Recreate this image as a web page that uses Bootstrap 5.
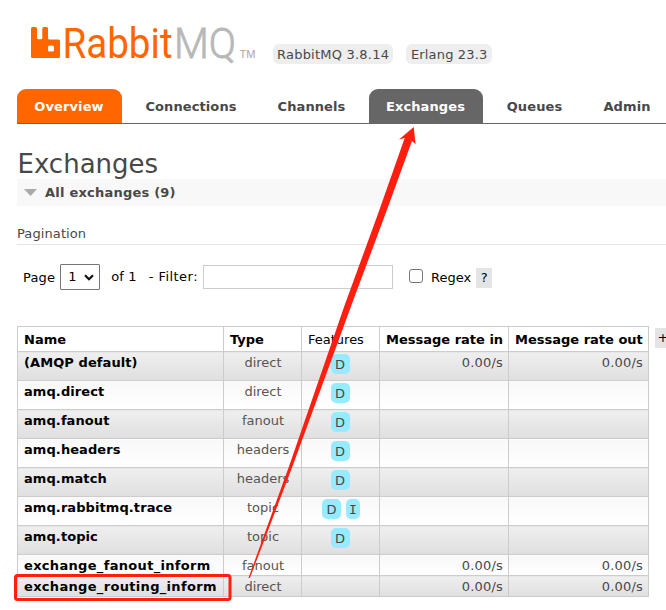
<!DOCTYPE html>
<html lang="en">
<head>
<meta charset="utf-8">
<meta name="viewport" content="width=device-width, initial-scale=1">
<title>RabbitMQ Management</title>
<link href="https://cdn.jsdelivr.net/npm/bootstrap@5.3.0/dist/css/bootstrap.min.css" rel="stylesheet">
<style>
body{font:13px/20px Verdana,"DejaVu Sans",sans-serif;color:#484848;background:#fff;width:666px;height:610px;overflow:hidden}
.top-bar{height:89px}
.logo{margin:23px 0 0 28px;width:230px;height:40px;display:block}
.version{background:#eee;border-radius:6px;height:20px;line-height:22px;padding:0 4px;margin-top:44px;white-space:nowrap}
.v-one{margin-left:15px;width:120px;letter-spacing:.22px}
.v-two{margin-left:13px;width:86px;padding-left:5px;letter-spacing:.15px}
.tabs{margin-left:17px;height:35px;gap:6px;border-bottom:1px solid #666}
.tabs a{flex:none;height:34px;line-height:36px;font-weight:700;color:#444;border-radius:9px 9px 0 0;text-align:center;text-decoration:none;letter-spacing:.1px}
.tabs .t-over{background:#f60;color:#fff;padding-right:1px}
.tabs .t-on{background:#666;color:#fff;padding-right:1px}
h1{font-size:26px;line-height:32px;font-weight:400;margin:24px 0 -1px 17.5px;color:#484848}
.band{margin-left:17px;height:27px;background:#f8f8f8;font-weight:700;padding-left:7px;gap:8px;letter-spacing:.22px}
.sub{margin:17px 0 0 17px;height:22px;line-height:22px;border-bottom:1px solid #e4e4e4;letter-spacing:.1px}
.filter{color:#000;height:26px;margin:19px 0 0 23px;white-space:nowrap}
.c-page{letter-spacing:.2px;position:relative;top:1px}
.picker{width:40px;height:26px;border:1px solid #767676;border-radius:1px;margin-left:5px;padding:0 5px 0 7px}
.c-of{margin-left:11px;letter-spacing:.1px}
.c-fl{margin-left:12px;letter-spacing:.47px}
.c-re{margin-right:5px;position:relative;top:1px}
.search{width:190px;height:24px;border:1px solid #ccc;border-radius:0;padding:0;margin-left:5px}
.tick{width:14px;height:14px;border:1px solid #767676!important;border-radius:3px!important;margin:0 8px 0 16px;position:relative;top:-1px}
.help{background:#e4e4e4;width:16px;height:20px;text-align:center}
.filter .help{margin-top:2px}
.list-wrap{margin:36px 0 0 17px}
.plus{margin:2px 0 0 6px;flex:none;color:#000}
.list{width:632px;table-layout:fixed;border-collapse:collapse;margin:0}
.list th,.list td{border:1px solid #ccc;padding:0 5px 0 6px;vertical-align:top;overflow:hidden;white-space:nowrap;line-height:20px}
.list th{height:25px;line-height:23px;padding-top:1px;color:#000}
.list td{height:29px;padding-top:1px}
.list .short td{height:21px;line-height:19px}
.list tbody td:first-child{font-weight:700;color:#000;letter-spacing:.08px}
.list tbody .short td:first-child{letter-spacing:.32px}
.list tbody td:nth-child(2),.list tbody td:nth-child(3){text-align:center}
.list tbody td:nth-child(2){color:#555}
.list tbody td:nth-child(3){padding:1px 6px 0 5px}
.list td:nth-child(n+4){text-align:right}
.list tbody td:nth-child(n+4){letter-spacing:.2px}
.list tbody tr:nth-child(odd) td{background:linear-gradient(#efefef,#dfdfdf)}
.list tbody tr:nth-child(even) td{background:linear-gradient(#f8f8f8,#fff)}
.feat{display:inline-block;background:#98ebff;border-radius:5px;height:20px;width:19px;margin:1px 0 0;vertical-align:top;line-height:21px;text-align:center}
.feat+.feat{width:14px;margin-left:5px;margin-right:-2px;font-family:"DejaVu Sans Mono",monospace}
.marks{left:0;top:0;width:666px;height:610px;pointer-events:none}
</style>
<script src="https://cdn.jsdelivr.net/npm/bootstrap@5.3.0/dist/js/bootstrap.bundle.min.js"></script>
</head>
<body class="position-relative">
<header class="top-bar d-flex align-items-start">
<svg class="logo flex-shrink-0 overflow-visible" viewBox="28 23 230 40" role="img" aria-label="RabbitMQ">
<path fill="#f60" fill-rule="evenodd" d="M32.500 27h3q1.500 0 1.500 1.500V38q0 1.300 1.500 1.300h2.500q1.300 0 1.300-1.300v-9.500q0-1.500 1.500-1.500h2.700q1.500 0 1.500 1.500V38q0 1.500 1.500 1.500h9q1.500 0 1.500 1.500v15.500q0 1.500-1.500 1.500h-26q-1.500 0-1.500-1.500v-28q0-1.500 1.500-1.500zM49.500 45.500q-1.500 0-1.500 1.500v3q0 1.500 1.500 1.500h3q1.500 0 1.500-1.500v-3q0-1.500-1.500-1.500z"/>
<text x="62.500" y="57.800" font-family="Roboto,sans-serif" font-size="42" fill="#f60" textLength="110" lengthAdjust="spacingAndGlyphs">Rabbit</text>
<text x="174" y="57.800" font-family="Roboto,sans-serif" font-size="42" font-weight="300" fill="#b8b8b8" stroke="#b8b8b8" stroke-width=".8" textLength="62" lengthAdjust="spacingAndGlyphs">MQ</text>
<text x="239.500" y="57.500" font-family="Liberation Sans,sans-serif" font-size="10.500" fill="#a8a8a8" textLength="16" lengthAdjust="spacingAndGlyphs">TM</text>
</svg>
<span class="version v-one">RabbitMQ 3.8.14</span>
<span class="version v-two">Erlang 23.3</span>
</header>
<nav class="tabs d-flex overflow-hidden">
<a class="t-over" style="width:105px">Overview</a><a style="width:126px">Connections</a><a style="width:103px">Channels</a><a class="t-on" style="width:114px">Exchanges</a><a style="width:91px">Queues</a><a style="width:82px">Admin</a>
</nav>
<main>
<h1>Exchanges</h1>
<div class="band d-flex align-items-center"><svg width="13" height="7" viewBox="0 0 13 7"><path d="M0 0h13L6.500 7z" fill="#aaa"/></svg><span>All exchanges (9)</span></div>
<div class="sub">Pagination</div>
<div class="filter d-flex align-items-center">
<span class="c-page">Page</span>
<div class="picker d-flex align-items-center justify-content-between"><span>1</span><svg width="10" height="7" viewBox="0 0 10 7"><path d="M1 1.200l4 4 4-4" fill="none" stroke="#111" stroke-width="2.200"/></svg></div>
<span class="c-of">of 1</span><span class="c-fl">- Filter:</span>
<input class="search" aria-label="Filter">
<input type="checkbox" class="form-check-input tick" aria-label="Regex"><span class="c-re">Regex</span><span class="help">?</span>
</div>
<div class="d-flex list-wrap">
<table class="list flex-shrink-0">
<colgroup><col style="width:206px"><col style="width:78px"><col style="width:78px"><col style="width:129px"><col style="width:140px"></colgroup>
<thead><tr><th>Name</th><th>Type</th><th class="fw-normal">Features</th><th>Message rate in</th><th>Message rate out</th></tr></thead>
<tbody>
<tr><td>(AMQP default)</td><td>direct</td><td><span class="feat">D</span></td><td>0.00/s</td><td>0.00/s</td></tr>
<tr><td>amq.direct</td><td>direct</td><td><span class="feat">D</span></td><td></td><td></td></tr>
<tr><td>amq.fanout</td><td>fanout</td><td><span class="feat">D</span></td><td></td><td></td></tr>
<tr><td>amq.headers</td><td>headers</td><td><span class="feat">D</span></td><td></td><td></td></tr>
<tr><td>amq.match</td><td>headers</td><td><span class="feat">D</span></td><td></td><td></td></tr>
<tr><td>amq.rabbitmq.trace</td><td>topic</td><td><span class="feat">D</span><span class="feat">I</span></td><td></td><td></td></tr>
<tr><td>amq.topic</td><td>topic</td><td><span class="feat">D</span></td><td></td><td></td></tr>
<tr class="short"><td>exchange_fanout_inform</td><td>fanout</td><td></td><td>0.00/s</td><td>0.00/s</td></tr>
<tr class="short"><td>exchange_routing_inform</td><td>direct</td><td></td><td>0.00/s</td><td>0.00/s</td></tr>
</tbody>
</table>
<span class="help plus">+</span>
</div>
</main>
<svg class="marks position-absolute" viewBox="0 0 666 610" aria-hidden="true">
<path fill="#ff1e10" d="M413.700 127L399 139.500l5.700-1.500L378.300 213 344.700 305 289.500 465 248.500 578h1.400L293 465l58.500-160 34.300-92 26.200-72 3.600 3.200z"/>
<rect x="15.500" y="575.500" width="214.500" height="24" rx="2" fill="none" stroke="#ff1e10" stroke-width="3"/>
</svg>
</body>
</html>
